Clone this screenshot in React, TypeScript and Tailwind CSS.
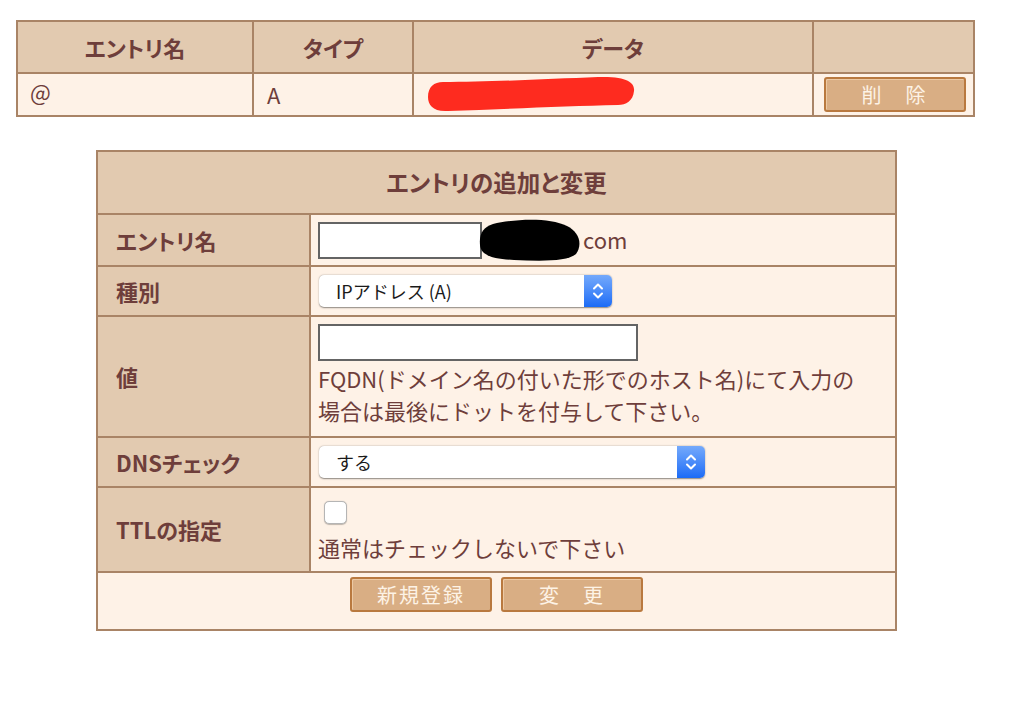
import React from 'react';

// DNSエントリ編集画面
const headCell = "border-2 border-[#a98466] bg-[#e2cab0] font-bold text-center [font-feature-settings:'palt']";
const labelCell = "border-2 border-[#a98466] bg-[#e2cab0] font-bold text-left pl-[18px] [font-feature-settings:'palt']";
const bodyCell = "border-2 border-[#a98466] bg-[#fef2e7] align-middle";

const OldButton: React.FC<{ label: string }> = ({ label }) => (
    <button
        type="button"
        className="inline-flex items-center justify-center w-[142px] h-[35px] rounded-[3px] border-2 border-[#b9793f] bg-[#d9ae84] text-[#fdf3e6] text-[20px] leading-none tracking-[2px] shadow-[inset_1px_1px_0_#ecc9a4]"
    >
        {label}
    </button>
);

const Stepper = () => (
    <span className="flex items-center justify-center w-[28px] h-full rounded-r-[5px] bg-gradient-to-b from-[#74a9fb] to-[#1a6bf6]">
        <svg width="12" height="20" viewBox="0 0 12 20" fill="none" stroke="white" strokeWidth="2" strokeLinecap="round" strokeLinejoin="round">
            <path d="M2 7.5 L6 3.5 L10 7.5" />
            <path d="M2 12.5 L6 16.5 L10 12.5" />
        </svg>
    </span>
);

const MacSelect: React.FC<{ value: string; width: string }> = ({ value, width }) => (
    <div className={`flex items-stretch h-[32px] ${width} rounded-[5px] bg-white shadow-[0_0.5px_1.5px_rgba(0,0,0,0.45)]`}>
        <span className="flex-1 flex items-center pl-[17px] text-[18px] text-[#1a1a1a]">{value}</span>
        <Stepper />
    </div>
);

const RedScribble = () => (
    <svg width="210" height="38" viewBox="0 -1 210 38" className="block">
        <path
            d="M15 5 C60 5 120 2 170 0 C200 -1 207 6 206 14 C205 24 198 28 190 28 C140 29 80 32 20 34 C5 35 0 28 0 20 C0 10 6 5 15 5 Z"
            fill="#fe2b1f"
        />
    </svg>
);

const BlackScribble = () => (
    <svg width="104" height="44" viewBox="0 0 104 44" className="block -ml-[3px]">
        <path
            d="M14 6 C35 1 70 -1 88 8 C100 14 104 26 97 36 C88 44 60 43 35 42 C15 41 2 38 1 27 C0 16 4 9 14 6 Z"
            fill="#000"
        />
    </svg>
);

export default function App() {
    return (
        <div className="pt-[20px] pl-[16px] w-[1016px] h-[712px] bg-white text-[#6e3e3b] text-[22px] [font-family:'Noto_Sans_CJK_JP',sans-serif]">
            {/* 登録済みエントリ */}
            <table className="table-fixed border-collapse border-2 border-[#a98466] w-[959px]">
                <colgroup>
                    <col className="w-[236px]" />
                    <col className="w-[160px]" />
                    <col className="w-[400px]" />
                    <col className="w-[161px]" />
                </colgroup>
                <thead>
                    <tr className="h-[52px]">
                        <th className={headCell}>エントリ名</th>
                        <th className={headCell}>タイプ</th>
                        <th className={headCell}>データ</th>
                        <th className={headCell}></th>
                    </tr>
                </thead>
                <tbody>
                    <tr className="h-[43px]">
                        <td className={`${bodyCell} text-left pl-[12px] pb-[6px]`}>@</td>
                        <td className={`${bodyCell} text-left pl-[13px]`}>A</td>
                        <td className={`${bodyCell} text-left pl-[14px]`}>
                            <RedScribble />
                        </td>
                        <td className={`${bodyCell} text-center pl-[2px]`}>
                            <OldButton label="削　除" />
                        </td>
                    </tr>
                </tbody>
            </table>

            {/* エントリの追加と変更 */}
            <table className="table-fixed border-collapse border-2 border-[#a98466] w-[799px] mt-[33px] ml-[80px]">
                <colgroup>
                    <col className="w-[213px]" />
                    <col className="w-[586px]" />
                </colgroup>
                <tbody>
                    <tr className="h-[63px]">
                        <th colSpan={2} className={`${headCell} text-[23.5px]`}>エントリの追加と変更</th>
                    </tr>
                    <tr className="h-[52px]">
                        <th className={labelCell}>エントリ名</th>
                        <td className={`${bodyCell} text-left pl-[7px]`}>
                            <div className="flex items-center">
                                <span className="block w-[164px] h-[37px] bg-white border-2 border-[#646464]" />
                                <BlackScribble />
                                <span className="pb-[2px]">com</span>
                            </div>
                        </td>
                    </tr>
                    <tr className="h-[50px]">
                        <th className={labelCell}>種別</th>
                        <td className={`${bodyCell} text-left pl-[8px]`}>
                            <MacSelect value="IPアドレス (A)" width="w-[293px]" />
                        </td>
                    </tr>
                    <tr className="h-[121px]">
                        <th className={labelCell}>値</th>
                        <td className={`${bodyCell} text-left pl-[7px] pt-[5px] pb-[8px]`}>
                            <span className="block w-[320px] h-[37px] bg-white border-2 border-[#646464]" />
                            <p className="mt-[1px] leading-[32px]">
                                FQDN(ドメイン名の付いた形でのホスト名)にて入力の
                                <br />
                                場合は最後にドットを付与して下さい。
                            </p>
                        </td>
                    </tr>
                    <tr className="h-[50px]">
                        <th className={labelCell}>DNSチェック</th>
                        <td className={`${bodyCell} text-left pl-[8px]`}>
                            <MacSelect value="する" width="w-[386px]" />
                        </td>
                    </tr>
                    <tr className="h-[85px]">
                        <th className={labelCell}>TTLの指定</th>
                        <td className={`${bodyCell} text-left pl-[13px] pt-[4px]`}>
                            <span className="block w-[23px] h-[23px] rounded-[5px] bg-white border border-[#b5b5b5] shadow-[0_0.5px_1px_rgba(0,0,0,0.25)]" />
                            <p className="-ml-[6px] mt-[7px] leading-[32px]">通常はチェックしないで下さい</p>
                        </td>
                    </tr>
                    <tr className="h-[58px]">
                        <td colSpan={2} className={`${bodyCell} align-top pt-[4px]`}>
                            <div className="flex justify-center gap-[9px]">
                                <OldButton label="新規登録" />
                                <OldButton label="変　更" />
                            </div>
                        </td>
                    </tr>
                </tbody>
            </table>
        </div>
    );
}
